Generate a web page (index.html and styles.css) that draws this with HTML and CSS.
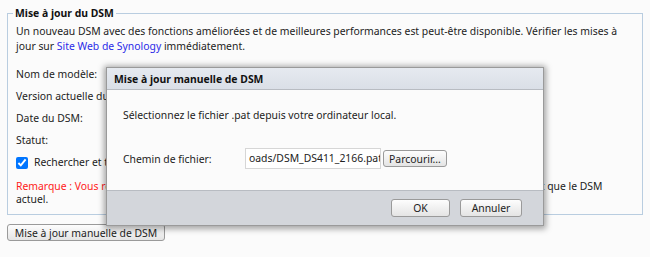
FILE: index.html
```html
<!DOCTYPE html>
<html>
    <head>
        <title>Mise à jour du DSM</title>
        <link rel="stylesheet" href="styles.css">
    </head>

    <body>
        <fieldset class="updatePanel">
            <legend>Mise à jour du DSM</legend>
            <p class="intro">Un nouveau DSM avec des fonctions améliorées et de meilleures performances est peut-être disponible. Vérifier les mises à jour sur <a href="#">Site Web de Synology</a> immédiatement.</p>

            <div class="infoRow">Nom de modèle:</div>
            <div class="infoRow">Version actuelle du DSM:</div>
            <div class="infoRow">Date du DSM:</div>
            <div class="infoRow">Statut:</div>
            <div class="infoRow checkRow">
                <input type="checkbox" id="autoCheck" checked />
                <label for="autoCheck">Rechercher et télécharger automatiquement les mises à jour du DSM</label>
            </div>
            <p class="remark"><span class="red">Remarque : Vous recevrez un message d'erreur</span> si le fichier .pat, sélectionné localement, n'est pas plus récent que le DSM actuel.</p>
        </fieldset>

        <button class="btn manualBtn">Mise à jour manuelle de DSM</button>

        <div class="dialog">
            <div class="dialogTitle">Mise à jour manuelle de DSM</div>
            <div class="dialogBody">
                <p>Sélectionnez le fichier .pat depuis votre ordinateur local.</p>
                <div class="fileRow">
                    <span class="fileLabel">Chemin de fichier:</span>
                    <span class="fileInput">oads/DSM_DS411_2166.pat</span>
                    <button class="btn browseBtn">Parcourir...</button>
                </div>
            </div>
            <div class="dialogFooter">
                <button class="btn footBtn okBtn">OK</button>
                <button class="btn footBtn">Annuler</button>
            </div>
        </div>
    </body>
</html>
```

FILE: styles.css
```css
body {
    margin: 0;
    background-color: #fbfbfb;
    font-family: "Noto Sans", "DejaVu Sans", sans-serif;
    font-size: 10.4px;
    color: #222;
    position: relative;
    height: 257px;
    overflow: hidden;
}

.updatePanel {
    margin: 6px 7px 0 7px;
    padding: 3px 14px 8px 8px;
    border: 1px solid #b9cde0;
}

legend {
    font-weight: bold;
    padding: 0 2px;
    margin-left: -3px;
    color: #111;
}

.intro {
    margin: 1px 0 13px 0;
    line-height: 15px;
}

a {
    color: #2a2ae8;
    text-decoration: none;
}

.infoRow {
    height: 22px;
    line-height: 15px;
    white-space: nowrap;
}

.checkRow {
    display: flex;
    align-items: center;
    height: 15px;
}

.checkRow input {
    margin: 0 6px 0 0;
    width: 12px;
    height: 12px;
}

.remark {
    margin: 10px 12px 0 0;
    line-height: 13px;
}

.red {
    color: #ff1a1a;
}

.btn {
    font-family: inherit;
    font-size: 10.4px;
    color: #222;
    border: 1px solid #9a9a9a;
    border-radius: 3px;
    background: linear-gradient(#fdfdfd, #e4e4e4);
    padding: 0 8px;
    height: 17px;
    white-space: nowrap;
}

.manualBtn {
    display: block;
    margin: 9px 0 0 7px;
    width: 158px;
    padding: 0;
}

.dialog {
    position: absolute;
    left: 106px;
    top: 67px;
    width: 436px;
    border: 1px solid #9a9a9a;
    background-color: #fff;
    box-shadow: 0 1px 6px 2px rgba(0, 0, 0, 0.35);
}

.dialogTitle {
    height: 21px;
    line-height: 23px;
    padding-left: 7px;
    font-weight: bold;
    color: #111;
    background: linear-gradient(#e6eaf0, #dadfe7);
    border-bottom: 1px solid #b8bcc2;
}

.dialogBody {
    height: 100px;
    padding: 0 16px;
    background-color: #fbfbfb;
}

.dialogBody p {
    margin: 0;
    padding-top: 18px;
    line-height: 15px;
}

.fileRow {
    display: flex;
    align-items: center;
    margin-top: 25px;
}

.fileLabel {
    width: 122px;
}

.fileInput {
    width: 131px;
    height: 19px;
    line-height: 19px;
    padding-left: 3px;
    border: 1px solid #d6d6d6;
    background-color: #fff;
    overflow: hidden;
    white-space: nowrap;
}

.browseBtn {
    margin-left: 2px;
    width: 64px;
    padding: 0;
}

.dialogFooter {
    height: 34px;
    display: flex;
    justify-content: flex-end;
    align-items: center;
    gap: 10px;
    padding-right: 21px;
    background-color: #d3d6db;
    border-top: 1px solid #b8bcc2;
}

.footBtn {
    width: 62px;
    height: 18px;
}

.okBtn {
    width: 59px;
}
```
